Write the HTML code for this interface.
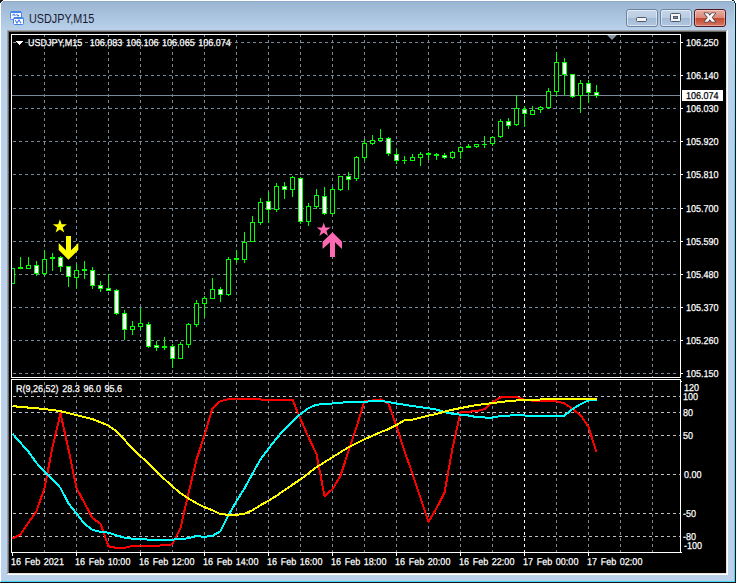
<!DOCTYPE html>
<html><head><meta charset="utf-8"><title>USDJPY,M15</title>
<style>
html,body{margin:0;padding:0;background:#fff;}
body{width:738px;height:584px;position:relative;overflow:hidden;font-family:"Liberation Sans",sans-serif;}
#win{position:absolute;left:0;top:0;width:736px;height:583px;background:#B9D1EA;}
#cap{position:absolute;left:0;top:0;width:736px;height:30px;background:linear-gradient(#99B4D1,#B9D1EA);}
.a{position:absolute;}
.t{position:absolute;white-space:nowrap;line-height:12px;}
.ax{font-size:10px;color:#fff;transform:scaleX(.9);transform-origin:0 0;word-spacing:1.3px;text-rendering:geometricPrecision;-webkit-text-stroke:0.25px currentColor;}
#title{left:28.5px;top:12px;font-size:12px;line-height:14px;color:#0b0b1e;opacity:.92;transform:scaleX(.9);transform-origin:0 0;}
</style></head><body>
<div id="win">
 <div id="cap"></div>
 <!-- outer edges -->
 <div class="a" style="left:0;top:0;width:736px;height:1px;background:#fff"></div>
 <div class="a" style="left:0;top:1px;width:734px;height:1px;background:#8FAACA"></div>
 <div class="a" style="left:0;top:0;width:1px;height:583px;background:#fff"></div>
 <div class="a" style="left:734px;top:2px;width:1px;height:580px;background:linear-gradient(#A8E9FC 0px,#55D9FA 160px,#42D5F8 580px)"></div>
 <div class="a" style="left:735px;top:2px;width:1px;height:581px;background:#161616"></div>
 <div class="a" style="left:1px;top:581px;width:734px;height:1px;background:#42D5F8"></div>
 <div class="a" style="left:0;top:582px;width:736px;height:1px;background:#161616"></div>
 <!-- corners -->
 <div class="a" style="left:0;top:0;width:3px;height:1px;background:#1c1c1c"></div>
 <div class="a" style="left:0;top:1px;width:2px;height:1px;background:#1c1c1c"></div>
 <div class="a" style="left:0;top:2px;width:1px;height:1px;background:#1c1c1c"></div>
 <div class="a" style="left:2px;top:1px;width:1px;height:1px;background:#f4f8fc"></div>
 <div class="a" style="left:1px;top:2px;width:1px;height:1px;background:#f4f8fc"></div>
 <div class="a" style="left:732px;top:0;width:2px;height:1px;background:#0B2228"></div>
 <div class="a" style="left:734px;top:1px;width:1px;height:2px;background:#0B2228"></div>
 <div class="a" style="left:734px;top:0;width:2px;height:1px;background:#fff"></div>
 <div class="a" style="left:735px;top:1px;width:1px;height:2px;background:#fff"></div>
 <div class="a" style="left:732px;top:1px;width:2px;height:1px;background:#C9F3FF"></div>
 <!-- icon -->
 <svg class="a" style="left:9px;top:10px" width="17" height="16" viewBox="0 0 17 16">
  <rect x="1.5" y="1.5" width="11" height="8" rx="1" fill="#fff" stroke="#4582F5" stroke-width="1"/>
  <rect x="2" y="1" width="10" height="2" fill="#4582F5"/>
  <path d="M3.5 5.5 L5 4.2 L6.5 6 M7.5 4 L9 6.2 L10 5" fill="none" stroke="#3E76EA" stroke-width="1.1"/>
  <rect x="4.5" y="7.5" width="10" height="7" rx="1" fill="#fff" stroke="#4582F5" stroke-width="1"/>
  <rect x="5" y="7" width="9" height="2" fill="#4582F5"/>
  <polyline points="6.3,10.2 8,13 10,10 12,13.2" fill="none" stroke="#3E76EA" stroke-width="1.1"/>
  <g fill="#3C9A70"><rect x="4" y="1" width="1" height="1"/><rect x="8" y="1" width="1" height="1"/><rect x="7" y="7" width="1" height="1"/><rect x="11" y="7" width="1" height="1"/><rect x="1" y="5" width="1" height="1"/><rect x="4" y="11" width="1" height="1"/><rect x="14" y="11" width="1" height="1"/><rect x="8" y="14" width="1" height="1"/></g>
 </svg>
 <div class="t" id="title">USDJPY,M15</div>
 <!-- buttons -->
 <svg class="a" style="left:620px;top:5px" width="112" height="26" viewBox="620 5 112 26">
  <defs>
   <linearGradient id="gb" x1="0" y1="0" x2="0" y2="1">
    <stop offset="0" stop-color="#C6D6E9"/><stop offset=".47" stop-color="#BACDE3"/>
    <stop offset=".5" stop-color="#A2B9D5"/><stop offset="1" stop-color="#B4C9E1"/>
   </linearGradient>
   <linearGradient id="gr" x1="0" y1="0" x2="0" y2="1">
    <stop offset="0" stop-color="#E9B0A3"/><stop offset=".47" stop-color="#DA8B79"/>
    <stop offset=".5" stop-color="#C4482D"/><stop offset="1" stop-color="#D47A66"/>
   </linearGradient>
  </defs>
  <rect x="626.5" y="9.5" width="31" height="17" rx="2.5" fill="url(#gb)" stroke="#6D84A1"/>
  <rect x="627.5" y="10.5" width="29" height="15" rx="1.5" fill="none" stroke="rgba(255,255,255,.5)"/>
  <rect x="660.5" y="9.5" width="31" height="17" rx="2.5" fill="url(#gb)" stroke="#6D84A1"/>
  <rect x="661.5" y="10.5" width="29" height="15" rx="1.5" fill="none" stroke="rgba(255,255,255,.5)"/>
  <rect x="694.5" y="9.5" width="31" height="17" rx="2.5" fill="url(#gr)" stroke="#501822"/>
  <rect x="695.5" y="10.5" width="29" height="15" rx="1.5" fill="none" stroke="rgba(255,255,255,.35)"/>
  <!-- min glyph -->
  <rect x="636.5" y="17.5" width="10" height="4" rx="1" fill="#F4F4F4" stroke="#4E596B"/>
  <!-- max glyph -->
  <rect x="670.5" y="13.5" width="10" height="8" rx="1" fill="#F4F4F4" stroke="#4E596B"/>
  <rect x="673.5" y="16.5" width="4" height="2" fill="#7B96BE" stroke="#4E596B"/>
  <!-- close glyph -->
  <path d="M704.4 13.3 L707.8 13.3 L709.8 15.8 L711.8 13.3 L715.2 13.3 L711.7 17.5 L715.2 21.7 L711.8 21.7 L709.8 19.2 L707.8 21.7 L704.4 21.7 L707.9 17.5 Z" fill="#FDFDFD" stroke="#53404A" stroke-width="1.5" stroke-linejoin="round" paint-order="stroke"/>
 </svg>
 <!-- client sunken edge -->
 <div class="a" style="left:7px;top:30px;width:721px;height:545px;background:#fff"></div>
 <div class="a" style="left:7px;top:30px;width:720px;height:544px;background:#A0A0A0"></div>
 <div class="a" style="left:8px;top:31px;width:719px;height:543px;background:#E3E3E3"></div>
 <div class="a" style="left:8px;top:31px;width:718px;height:542px;background:#696969"></div>
 <div class="a" style="left:9px;top:32px;width:717px;height:541px;background:#000"></div>
</div>
<svg class="a" style="left:0;top:0" width="738" height="584" viewBox="0 0 738 584">
<defs><clipPath id="cm"><rect x="12" y="35" width="668" height="342"/></clipPath><clipPath id="cs"><rect x="12" y="380" width="668" height="172"/></clipPath></defs>
<g shape-rendering="crispEdges">
<line x1="44.5" y1="34" x2="44.5" y2="377" stroke="#778899" stroke-width="1" stroke-dasharray="3 3"/>
<line x1="44.5" y1="382" x2="44.5" y2="552" stroke="#778899" stroke-width="1" stroke-dasharray="3 3"/>
<line x1="76.5" y1="34" x2="76.5" y2="377" stroke="#778899" stroke-width="1" stroke-dasharray="3 3"/>
<line x1="76.5" y1="382" x2="76.5" y2="552" stroke="#778899" stroke-width="1" stroke-dasharray="3 3"/>
<line x1="108.5" y1="34" x2="108.5" y2="377" stroke="#778899" stroke-width="1" stroke-dasharray="3 3"/>
<line x1="108.5" y1="382" x2="108.5" y2="552" stroke="#778899" stroke-width="1" stroke-dasharray="3 3"/>
<line x1="140.5" y1="34" x2="140.5" y2="377" stroke="#778899" stroke-width="1" stroke-dasharray="3 3"/>
<line x1="140.5" y1="382" x2="140.5" y2="552" stroke="#778899" stroke-width="1" stroke-dasharray="3 3"/>
<line x1="172.5" y1="34" x2="172.5" y2="377" stroke="#778899" stroke-width="1" stroke-dasharray="3 3"/>
<line x1="172.5" y1="382" x2="172.5" y2="552" stroke="#778899" stroke-width="1" stroke-dasharray="3 3"/>
<line x1="204.5" y1="34" x2="204.5" y2="377" stroke="#778899" stroke-width="1" stroke-dasharray="3 3"/>
<line x1="204.5" y1="382" x2="204.5" y2="552" stroke="#778899" stroke-width="1" stroke-dasharray="3 3"/>
<line x1="236.5" y1="34" x2="236.5" y2="377" stroke="#778899" stroke-width="1" stroke-dasharray="3 3"/>
<line x1="236.5" y1="382" x2="236.5" y2="552" stroke="#778899" stroke-width="1" stroke-dasharray="3 3"/>
<line x1="268.5" y1="34" x2="268.5" y2="377" stroke="#778899" stroke-width="1" stroke-dasharray="3 3"/>
<line x1="268.5" y1="382" x2="268.5" y2="552" stroke="#778899" stroke-width="1" stroke-dasharray="3 3"/>
<line x1="300.5" y1="34" x2="300.5" y2="377" stroke="#778899" stroke-width="1" stroke-dasharray="3 3"/>
<line x1="300.5" y1="382" x2="300.5" y2="552" stroke="#778899" stroke-width="1" stroke-dasharray="3 3"/>
<line x1="332.5" y1="34" x2="332.5" y2="377" stroke="#778899" stroke-width="1" stroke-dasharray="3 3"/>
<line x1="332.5" y1="382" x2="332.5" y2="552" stroke="#778899" stroke-width="1" stroke-dasharray="3 3"/>
<line x1="364.5" y1="34" x2="364.5" y2="377" stroke="#778899" stroke-width="1" stroke-dasharray="3 3"/>
<line x1="364.5" y1="382" x2="364.5" y2="552" stroke="#778899" stroke-width="1" stroke-dasharray="3 3"/>
<line x1="396.5" y1="34" x2="396.5" y2="377" stroke="#778899" stroke-width="1" stroke-dasharray="3 3"/>
<line x1="396.5" y1="382" x2="396.5" y2="552" stroke="#778899" stroke-width="1" stroke-dasharray="3 3"/>
<line x1="428.5" y1="34" x2="428.5" y2="377" stroke="#778899" stroke-width="1" stroke-dasharray="3 3"/>
<line x1="428.5" y1="382" x2="428.5" y2="552" stroke="#778899" stroke-width="1" stroke-dasharray="3 3"/>
<line x1="460.5" y1="34" x2="460.5" y2="377" stroke="#778899" stroke-width="1" stroke-dasharray="3 3"/>
<line x1="460.5" y1="382" x2="460.5" y2="552" stroke="#778899" stroke-width="1" stroke-dasharray="3 3"/>
<line x1="492.5" y1="34" x2="492.5" y2="377" stroke="#778899" stroke-width="1" stroke-dasharray="3 3"/>
<line x1="492.5" y1="382" x2="492.5" y2="552" stroke="#778899" stroke-width="1" stroke-dasharray="3 3"/>
<line x1="524.5" y1="34" x2="524.5" y2="377" stroke="#FFFFFF" stroke-width="1" stroke-dasharray="3 3"/>
<line x1="524.5" y1="382" x2="524.5" y2="552" stroke="#FFFFFF" stroke-width="1" stroke-dasharray="3 3"/>
<line x1="556.5" y1="34" x2="556.5" y2="377" stroke="#778899" stroke-width="1" stroke-dasharray="3 3"/>
<line x1="556.5" y1="382" x2="556.5" y2="552" stroke="#778899" stroke-width="1" stroke-dasharray="3 3"/>
<line x1="588.5" y1="34" x2="588.5" y2="377" stroke="#778899" stroke-width="1" stroke-dasharray="3 3"/>
<line x1="588.5" y1="382" x2="588.5" y2="552" stroke="#778899" stroke-width="1" stroke-dasharray="3 3"/>
<line x1="620.5" y1="34" x2="620.5" y2="377" stroke="#778899" stroke-width="1" stroke-dasharray="3 3"/>
<line x1="620.5" y1="382" x2="620.5" y2="552" stroke="#778899" stroke-width="1" stroke-dasharray="3 3"/>
<line x1="652.5" y1="34" x2="652.5" y2="377" stroke="#778899" stroke-width="1" stroke-dasharray="3 3"/>
<line x1="652.5" y1="382" x2="652.5" y2="552" stroke="#778899" stroke-width="1" stroke-dasharray="3 3"/>
<line x1="13" y1="42.5" x2="679" y2="42.5" stroke="#778899" stroke-width="1" stroke-dasharray="3 3"/>
<line x1="13" y1="75.5" x2="679" y2="75.5" stroke="#778899" stroke-width="1" stroke-dasharray="3 3"/>
<line x1="13" y1="108.5" x2="679" y2="108.5" stroke="#778899" stroke-width="1" stroke-dasharray="3 3"/>
<line x1="13" y1="141.5" x2="679" y2="141.5" stroke="#778899" stroke-width="1" stroke-dasharray="3 3"/>
<line x1="13" y1="174.5" x2="679" y2="174.5" stroke="#778899" stroke-width="1" stroke-dasharray="3 3"/>
<line x1="13" y1="208.5" x2="679" y2="208.5" stroke="#778899" stroke-width="1" stroke-dasharray="3 3"/>
<line x1="13" y1="241.5" x2="679" y2="241.5" stroke="#778899" stroke-width="1" stroke-dasharray="3 3"/>
<line x1="13" y1="274.5" x2="679" y2="274.5" stroke="#778899" stroke-width="1" stroke-dasharray="3 3"/>
<line x1="13" y1="307.5" x2="679" y2="307.5" stroke="#778899" stroke-width="1" stroke-dasharray="3 3"/>
<line x1="13" y1="340.5" x2="679" y2="340.5" stroke="#778899" stroke-width="1" stroke-dasharray="3 3"/>
<line x1="13" y1="373.5" x2="679" y2="373.5" stroke="#778899" stroke-width="1" stroke-dasharray="3 3"/>
<line x1="13" y1="396.5" x2="680" y2="396.5" stroke="#C0C0C0" stroke-width="1" stroke-dasharray="3 3"/>
<line x1="13" y1="412.5" x2="680" y2="412.5" stroke="#C0C0C0" stroke-width="1" stroke-dasharray="3 3"/>
<line x1="13" y1="435.5" x2="680" y2="435.5" stroke="#C0C0C0" stroke-width="1" stroke-dasharray="3 3"/>
<line x1="13" y1="474.5" x2="680" y2="474.5" stroke="#C0C0C0" stroke-width="1" stroke-dasharray="3 3"/>
<line x1="13" y1="513.5" x2="680" y2="513.5" stroke="#C0C0C0" stroke-width="1" stroke-dasharray="3 3"/>
<line x1="13" y1="536.5" x2="680" y2="536.5" stroke="#C0C0C0" stroke-width="1" stroke-dasharray="3 3"/>
<line x1="12" y1="95.5" x2="680" y2="95.5" stroke="#778899" stroke-width="1"/>
</g>
<g shape-rendering="crispEdges" clip-path="url(#cm)">
<rect x="12" y="268" width="1" height="16" fill="#00FF00"/>
<rect x="10" y="268" width="5" height="16" fill="#00FF00"/>
<rect x="11" y="269" width="3" height="14" fill="#000000"/>
<rect x="20" y="257" width="1" height="12" fill="#00FF00"/>
<rect x="18" y="267" width="5" height="2" fill="#00FF00"/>
<rect x="28" y="257" width="1" height="12" fill="#00FF00"/>
<rect x="26" y="265" width="5" height="4" fill="#00FF00"/>
<rect x="27" y="266" width="3" height="2" fill="#000000"/>
<rect x="36" y="261" width="1" height="15" fill="#00FF00"/>
<rect x="34" y="265" width="5" height="9" fill="#00FF00"/>
<rect x="35" y="266" width="3" height="7" fill="#FFFFFF"/>
<rect x="44" y="250" width="1" height="26" fill="#00FF00"/>
<rect x="42" y="259" width="5" height="15" fill="#00FF00"/>
<rect x="43" y="260" width="3" height="13" fill="#000000"/>
<rect x="52" y="253" width="1" height="18" fill="#00FF00"/>
<rect x="50" y="257" width="5" height="2" fill="#00FF00"/>
<rect x="60" y="256" width="1" height="16" fill="#00FF00"/>
<rect x="58" y="257" width="5" height="10" fill="#00FF00"/>
<rect x="59" y="258" width="3" height="8" fill="#FFFFFF"/>
<rect x="68" y="266" width="1" height="21" fill="#00FF00"/>
<rect x="66" y="266" width="5" height="11" fill="#00FF00"/>
<rect x="67" y="267" width="3" height="9" fill="#FFFFFF"/>
<rect x="76" y="264" width="1" height="25" fill="#00FF00"/>
<rect x="74" y="270" width="5" height="8" fill="#00FF00"/>
<rect x="75" y="271" width="3" height="6" fill="#000000"/>
<rect x="84" y="261" width="1" height="18" fill="#00FF00"/>
<rect x="82" y="269" width="5" height="2" fill="#00FF00"/>
<rect x="92" y="267" width="1" height="22" fill="#00FF00"/>
<rect x="90" y="270" width="5" height="16" fill="#00FF00"/>
<rect x="91" y="271" width="3" height="14" fill="#FFFFFF"/>
<rect x="100" y="281" width="1" height="11" fill="#00FF00"/>
<rect x="98" y="285" width="5" height="4" fill="#00FF00"/>
<rect x="99" y="286" width="3" height="2" fill="#FFFFFF"/>
<rect x="108" y="274" width="1" height="17" fill="#00FF00"/>
<rect x="106" y="288" width="5" height="3" fill="#00FF00"/>
<rect x="107" y="289" width="3" height="1" fill="#FFFFFF"/>
<rect x="116" y="289" width="1" height="26" fill="#00FF00"/>
<rect x="114" y="290" width="5" height="24" fill="#00FF00"/>
<rect x="115" y="291" width="3" height="22" fill="#FFFFFF"/>
<rect x="124" y="310" width="1" height="30" fill="#00FF00"/>
<rect x="122" y="313" width="5" height="17" fill="#00FF00"/>
<rect x="123" y="314" width="3" height="15" fill="#FFFFFF"/>
<rect x="132" y="321" width="1" height="14" fill="#00FF00"/>
<rect x="130" y="326" width="5" height="4" fill="#00FF00"/>
<rect x="131" y="327" width="3" height="2" fill="#000000"/>
<rect x="140" y="308" width="1" height="22" fill="#00FF00"/>
<rect x="138" y="323" width="5" height="4" fill="#00FF00"/>
<rect x="139" y="324" width="3" height="2" fill="#000000"/>
<rect x="148" y="322" width="1" height="26" fill="#00FF00"/>
<rect x="146" y="324" width="5" height="23" fill="#00FF00"/>
<rect x="147" y="325" width="3" height="21" fill="#FFFFFF"/>
<rect x="156" y="341" width="1" height="10" fill="#00FF00"/>
<rect x="154" y="345" width="5" height="3" fill="#00FF00"/>
<rect x="155" y="346" width="3" height="1" fill="#FFFFFF"/>
<rect x="164" y="337" width="1" height="13" fill="#00FF00"/>
<rect x="162" y="346" width="5" height="2" fill="#00FF00"/>
<rect x="172" y="344" width="1" height="24" fill="#00FF00"/>
<rect x="170" y="346" width="5" height="13" fill="#00FF00"/>
<rect x="171" y="347" width="3" height="11" fill="#FFFFFF"/>
<rect x="180" y="342" width="1" height="17" fill="#00FF00"/>
<rect x="178" y="344" width="5" height="15" fill="#00FF00"/>
<rect x="179" y="345" width="3" height="13" fill="#000000"/>
<rect x="188" y="323" width="1" height="25" fill="#00FF00"/>
<rect x="186" y="324" width="5" height="21" fill="#00FF00"/>
<rect x="187" y="325" width="3" height="19" fill="#000000"/>
<rect x="196" y="300" width="1" height="27" fill="#00FF00"/>
<rect x="194" y="303" width="5" height="22" fill="#00FF00"/>
<rect x="195" y="304" width="3" height="20" fill="#000000"/>
<rect x="204" y="296" width="1" height="21" fill="#00FF00"/>
<rect x="202" y="298" width="5" height="6" fill="#00FF00"/>
<rect x="203" y="299" width="3" height="4" fill="#000000"/>
<rect x="212" y="278" width="1" height="21" fill="#00FF00"/>
<rect x="210" y="289" width="5" height="10" fill="#00FF00"/>
<rect x="211" y="290" width="3" height="8" fill="#000000"/>
<rect x="220" y="287" width="1" height="15" fill="#00FF00"/>
<rect x="218" y="289" width="5" height="6" fill="#00FF00"/>
<rect x="219" y="290" width="3" height="4" fill="#FFFFFF"/>
<rect x="228" y="257" width="1" height="39" fill="#00FF00"/>
<rect x="226" y="259" width="5" height="36" fill="#00FF00"/>
<rect x="227" y="260" width="3" height="34" fill="#000000"/>
<rect x="236" y="250" width="1" height="13" fill="#00FF00"/>
<rect x="234" y="258" width="5" height="2" fill="#00FF00"/>
<rect x="244" y="232" width="1" height="31" fill="#00FF00"/>
<rect x="242" y="242" width="5" height="18" fill="#00FF00"/>
<rect x="243" y="243" width="3" height="16" fill="#000000"/>
<rect x="252" y="216" width="1" height="26" fill="#00FF00"/>
<rect x="250" y="222" width="5" height="20" fill="#00FF00"/>
<rect x="251" y="223" width="3" height="18" fill="#000000"/>
<rect x="260" y="198" width="1" height="27" fill="#00FF00"/>
<rect x="258" y="202" width="5" height="21" fill="#00FF00"/>
<rect x="259" y="203" width="3" height="19" fill="#000000"/>
<rect x="268" y="192" width="1" height="31" fill="#00FF00"/>
<rect x="266" y="201" width="5" height="9" fill="#00FF00"/>
<rect x="267" y="202" width="3" height="7" fill="#FFFFFF"/>
<rect x="276" y="183" width="1" height="29" fill="#00FF00"/>
<rect x="274" y="186" width="5" height="24" fill="#00FF00"/>
<rect x="275" y="187" width="3" height="22" fill="#000000"/>
<rect x="284" y="182" width="1" height="17" fill="#00FF00"/>
<rect x="282" y="186" width="5" height="4" fill="#00FF00"/>
<rect x="283" y="187" width="3" height="2" fill="#FFFFFF"/>
<rect x="292" y="176" width="1" height="21" fill="#00FF00"/>
<rect x="290" y="177" width="5" height="13" fill="#00FF00"/>
<rect x="291" y="178" width="3" height="11" fill="#000000"/>
<rect x="300" y="177" width="1" height="47" fill="#00FF00"/>
<rect x="298" y="178" width="5" height="44" fill="#00FF00"/>
<rect x="299" y="179" width="3" height="42" fill="#FFFFFF"/>
<rect x="308" y="203" width="1" height="23" fill="#00FF00"/>
<rect x="306" y="206" width="5" height="16" fill="#00FF00"/>
<rect x="307" y="207" width="3" height="14" fill="#000000"/>
<rect x="316" y="189" width="1" height="20" fill="#00FF00"/>
<rect x="314" y="195" width="5" height="12" fill="#00FF00"/>
<rect x="315" y="196" width="3" height="10" fill="#000000"/>
<rect x="324" y="187" width="1" height="28" fill="#00FF00"/>
<rect x="322" y="196" width="5" height="18" fill="#00FF00"/>
<rect x="323" y="197" width="3" height="16" fill="#FFFFFF"/>
<rect x="332" y="187" width="1" height="27" fill="#00FF00"/>
<rect x="330" y="189" width="5" height="25" fill="#00FF00"/>
<rect x="331" y="190" width="3" height="23" fill="#000000"/>
<rect x="340" y="176" width="1" height="15" fill="#00FF00"/>
<rect x="338" y="176" width="5" height="14" fill="#00FF00"/>
<rect x="339" y="177" width="3" height="12" fill="#000000"/>
<rect x="348" y="172" width="1" height="18" fill="#00FF00"/>
<rect x="346" y="176" width="5" height="4" fill="#00FF00"/>
<rect x="347" y="177" width="3" height="2" fill="#FFFFFF"/>
<rect x="356" y="156" width="1" height="25" fill="#00FF00"/>
<rect x="354" y="157" width="5" height="22" fill="#00FF00"/>
<rect x="355" y="158" width="3" height="20" fill="#000000"/>
<rect x="364" y="139" width="1" height="22" fill="#00FF00"/>
<rect x="362" y="143" width="5" height="15" fill="#00FF00"/>
<rect x="363" y="144" width="3" height="13" fill="#000000"/>
<rect x="372" y="135" width="1" height="10" fill="#00FF00"/>
<rect x="370" y="140" width="5" height="4" fill="#00FF00"/>
<rect x="371" y="141" width="3" height="2" fill="#000000"/>
<rect x="380" y="129" width="1" height="12" fill="#00FF00"/>
<rect x="378" y="138" width="5" height="3" fill="#00FF00"/>
<rect x="379" y="139" width="3" height="1" fill="#000000"/>
<rect x="388" y="137" width="1" height="19" fill="#00FF00"/>
<rect x="386" y="138" width="5" height="16" fill="#00FF00"/>
<rect x="387" y="139" width="3" height="14" fill="#FFFFFF"/>
<rect x="396" y="149" width="1" height="15" fill="#00FF00"/>
<rect x="394" y="154" width="5" height="7" fill="#00FF00"/>
<rect x="395" y="155" width="3" height="5" fill="#FFFFFF"/>
<rect x="404" y="156" width="1" height="8" fill="#00FF00"/>
<rect x="402" y="160" width="5" height="1" fill="#00FF00"/>
<rect x="412" y="154" width="1" height="7" fill="#00FF00"/>
<rect x="410" y="157" width="5" height="4" fill="#00FF00"/>
<rect x="411" y="158" width="3" height="2" fill="#000000"/>
<rect x="420" y="152" width="1" height="14" fill="#00FF00"/>
<rect x="418" y="154" width="5" height="4" fill="#00FF00"/>
<rect x="419" y="155" width="3" height="2" fill="#000000"/>
<rect x="428" y="152" width="1" height="8" fill="#00FF00"/>
<rect x="426" y="153" width="5" height="2" fill="#00FF00"/>
<rect x="436" y="153" width="1" height="7" fill="#00FF00"/>
<rect x="434" y="154" width="5" height="2" fill="#00FF00"/>
<rect x="444" y="153" width="1" height="6" fill="#00FF00"/>
<rect x="442" y="155" width="5" height="3" fill="#00FF00"/>
<rect x="443" y="156" width="3" height="1" fill="#FFFFFF"/>
<rect x="452" y="151" width="1" height="8" fill="#00FF00"/>
<rect x="450" y="152" width="5" height="6" fill="#00FF00"/>
<rect x="451" y="153" width="3" height="4" fill="#000000"/>
<rect x="460" y="146" width="1" height="13" fill="#00FF00"/>
<rect x="458" y="147" width="5" height="5" fill="#00FF00"/>
<rect x="459" y="148" width="3" height="3" fill="#000000"/>
<rect x="468" y="144" width="1" height="4" fill="#00FF00"/>
<rect x="466" y="146" width="5" height="2" fill="#00FF00"/>
<rect x="476" y="144" width="1" height="4" fill="#00FF00"/>
<rect x="474" y="144" width="5" height="3" fill="#00FF00"/>
<rect x="475" y="145" width="3" height="1" fill="#000000"/>
<rect x="484" y="136" width="1" height="12" fill="#00FF00"/>
<rect x="482" y="144" width="5" height="1" fill="#00FF00"/>
<rect x="492" y="136" width="1" height="10" fill="#00FF00"/>
<rect x="490" y="137" width="5" height="7" fill="#00FF00"/>
<rect x="491" y="138" width="3" height="5" fill="#000000"/>
<rect x="500" y="119" width="1" height="19" fill="#00FF00"/>
<rect x="498" y="121" width="5" height="16" fill="#00FF00"/>
<rect x="499" y="122" width="3" height="14" fill="#000000"/>
<rect x="508" y="118" width="1" height="11" fill="#00FF00"/>
<rect x="506" y="121" width="5" height="5" fill="#00FF00"/>
<rect x="507" y="122" width="3" height="3" fill="#FFFFFF"/>
<rect x="516" y="95" width="1" height="31" fill="#00FF00"/>
<rect x="514" y="108" width="5" height="17" fill="#00FF00"/>
<rect x="515" y="109" width="3" height="15" fill="#000000"/>
<rect x="524" y="106" width="1" height="21" fill="#00FF00"/>
<rect x="522" y="109" width="5" height="5" fill="#00FF00"/>
<rect x="523" y="110" width="3" height="3" fill="#FFFFFF"/>
<rect x="532" y="106" width="1" height="9" fill="#00FF00"/>
<rect x="530" y="110" width="5" height="5" fill="#00FF00"/>
<rect x="531" y="111" width="3" height="3" fill="#000000"/>
<rect x="540" y="106" width="1" height="7" fill="#00FF00"/>
<rect x="538" y="107" width="5" height="3" fill="#00FF00"/>
<rect x="539" y="108" width="3" height="1" fill="#000000"/>
<rect x="548" y="88" width="1" height="21" fill="#00FF00"/>
<rect x="546" y="91" width="5" height="17" fill="#00FF00"/>
<rect x="547" y="92" width="3" height="15" fill="#000000"/>
<rect x="556" y="52" width="1" height="44" fill="#00FF00"/>
<rect x="554" y="62" width="5" height="30" fill="#00FF00"/>
<rect x="555" y="63" width="3" height="28" fill="#000000"/>
<rect x="564" y="58" width="1" height="37" fill="#00FF00"/>
<rect x="562" y="62" width="5" height="13" fill="#00FF00"/>
<rect x="563" y="63" width="3" height="11" fill="#FFFFFF"/>
<rect x="572" y="74" width="1" height="24" fill="#00FF00"/>
<rect x="570" y="74" width="5" height="23" fill="#00FF00"/>
<rect x="571" y="75" width="3" height="21" fill="#FFFFFF"/>
<rect x="580" y="80" width="1" height="33" fill="#00FF00"/>
<rect x="578" y="83" width="5" height="13" fill="#00FF00"/>
<rect x="579" y="84" width="3" height="11" fill="#000000"/>
<rect x="588" y="80" width="1" height="23" fill="#00FF00"/>
<rect x="586" y="83" width="5" height="10" fill="#00FF00"/>
<rect x="587" y="84" width="3" height="8" fill="#FFFFFF"/>
<rect x="596" y="85" width="1" height="13" fill="#00FF00"/>
<rect x="594" y="92" width="5" height="4" fill="#00FF00"/>
<rect x="595" y="93" width="3" height="2" fill="#FFFFFF"/>
</g>
<polygon points="607,35 617,35 612,40" fill="#8593A3"/>
<polygon points="59.90,219.20 61.60,224.25 66.94,224.31 62.66,227.50 64.25,232.59 59.90,229.50 55.55,232.59 57.14,227.50 52.86,224.31 58.20,224.25" fill="#FFFF00"/>
<polygon points="66,236 71,236 71,250.2 78.3,243 78.3,250 68.5,259.7 58.7,250 58.7,243 66,250.2" fill="#FFFF00"/>
<polygon points="323.70,222.50 325.40,227.55 330.74,227.61 326.46,230.80 328.05,235.89 323.70,232.80 319.35,235.89 320.94,230.80 316.66,227.61 322.00,227.55" fill="#FF69B4"/>
<polygon points="332.5,232.2 342,241.7 342,249 335,242.2 335,257 330,257 330,242.2 322.6,249 322.6,241.7" fill="#FF69B4"/>
<polyline points="12.5,538.5 20.5,534.4 28.5,522.7 36.5,511.0 44.5,488.0 52.5,447.3 60.5,413.3 68.5,449.5 76.5,488.0 84.5,503.0 92.5,518.2 100.5,523.8 108.5,546.3 116.5,547.9 124.5,547.9 132.5,545.9 140.5,545.5 148.5,545.5 156.5,545.7 164.5,545.3 172.5,544.3 180.5,528.2 188.5,493.1 196.5,459.6 204.5,435.2 212.5,408.1 220.5,401.1 228.5,399.1 236.5,398.5 244.5,398.5 252.5,398.5 260.5,399.5 268.5,399.5 276.5,399.5 284.5,399.5 292.5,399.6 300.5,419.1 308.5,437.2 316.5,454.1 324.5,496.2 332.5,489.2 340.5,475.7 348.5,451.1 356.5,427.1 364.5,401.1 372.5,400.5 380.5,399.5 388.5,403.7 396.5,426.1 404.5,451.1 412.5,473.7 420.5,498.2 428.5,521.8 436.5,508.2 444.5,492.7 452.5,448.2 460.5,412.5 468.5,411.7 476.5,411.1 484.5,409.1 492.5,402.1 500.5,397.5 508.5,397.1 516.5,397.1 524.5,399.7 532.5,400.7 540.5,400.7 548.5,400.6 556.5,401.3 564.5,403.3 572.5,409.1 580.5,415.1 588.5,427.1 596.5,452.2" fill="none" stroke="#FF0000" stroke-width="2" stroke-linejoin="round" shape-rendering="crispEdges" clip-path="url(#cs)"/>
<polyline points="12.5,433.8 20.5,442.8 28.5,451.8 36.5,463.0 44.5,471.6 52.5,479.2 60.5,488.0 68.5,503.4 76.5,513.5 84.5,523.8 92.5,529.9 100.5,531.9 108.5,532.7 116.5,535.3 124.5,537.7 132.5,538.7 140.5,538.9 148.5,539.7 156.5,539.7 164.5,539.7 172.5,539.7 180.5,538.9 188.5,538.3 196.5,535.9 204.5,536.9 212.5,535.7 220.5,531.3 228.5,515.2 236.5,501.2 244.5,488.4 252.5,473.7 260.5,459.2 268.5,448.6 276.5,438.6 284.5,429.1 292.5,421.1 300.5,414.1 308.5,408.1 316.5,404.7 324.5,404.1 332.5,403.5 340.5,402.7 348.5,402.1 356.5,401.7 364.5,401.7 372.5,401.3 380.5,400.7 388.5,402.1 396.5,403.5 404.5,404.7 412.5,406.1 420.5,407.1 428.5,408.3 436.5,409.6 444.5,412.1 452.5,413.7 460.5,414.7 468.5,415.5 476.5,417.1 484.5,417.5 492.5,417.5 500.5,416.1 508.5,415.7 516.5,414.7 524.5,415.5 532.5,415.5 540.5,415.5 548.5,415.5 556.5,415.5 564.5,415.5 572.5,409.1 580.5,404.1 588.5,400.5 596.5,399.7" fill="none" stroke="#00FFFF" stroke-width="2" stroke-linejoin="round" shape-rendering="crispEdges" clip-path="url(#cs)"/>
<polyline points="12.5,406.1 20.5,406.9 28.5,407.6 36.5,408.3 44.5,409.1 52.5,410.1 60.5,411.1 68.5,413.1 76.5,415.1 84.5,417.1 92.5,419.1 100.5,422.2 108.5,425.7 116.5,431.1 124.5,439.8 132.5,448.6 140.5,456.2 148.5,463.4 156.5,471.1 164.5,479.1 172.5,486.5 180.5,493.1 188.5,498.6 196.5,503.2 204.5,507.2 212.5,510.2 220.5,514.2 228.5,514.8 236.5,514.8 244.5,513.8 252.5,510.2 260.5,505.2 268.5,500.8 276.5,495.8 284.5,490.1 292.5,484.7 300.5,479.3 308.5,473.3 316.5,467.2 324.5,462.2 332.5,457.2 340.5,452.2 348.5,447.2 356.5,443.2 364.5,439.2 372.5,435.8 380.5,432.2 388.5,429.1 396.5,425.1 404.5,420.1 412.5,419.7 420.5,417.7 428.5,415.7 436.5,413.9 444.5,411.7 452.5,409.7 460.5,408.1 468.5,406.5 476.5,405.1 484.5,404.1 492.5,403.1 500.5,402.1 508.5,401.1 516.5,400.5 524.5,400.1 532.5,399.7 540.5,399.5 548.5,399.1 556.5,398.9 564.5,398.7 572.5,398.7 580.5,398.7 588.5,398.7 596.5,398.7" fill="none" stroke="#FFFF00" stroke-width="2" stroke-linejoin="round" shape-rendering="crispEdges" clip-path="url(#cs)"/>
<g shape-rendering="crispEdges" fill="#FFFFFF">
<rect x="11" y="34" width="670" height="1" fill="#FFFFFF" />
<rect x="11" y="34" width="1" height="344" fill="#FFFFFF" />
<rect x="680" y="34" width="1" height="344" fill="#FFFFFF" />
<rect x="11" y="377" width="670" height="1" fill="#FFFFFF" />
<rect x="11" y="379" width="670" height="1" fill="#FFFFFF" />
<rect x="11" y="379" width="1" height="174" fill="#FFFFFF" />
<rect x="680" y="379" width="1" height="174" fill="#FFFFFF" />
<rect x="11" y="552" width="670" height="1" fill="#FFFFFF" />
<rect x="681" y="42" width="2" height="1" fill="#FFFFFF" />
<rect x="681" y="75" width="2" height="1" fill="#FFFFFF" />
<rect x="681" y="108" width="2" height="1" fill="#FFFFFF" />
<rect x="681" y="141" width="2" height="1" fill="#FFFFFF" />
<rect x="681" y="174" width="2" height="1" fill="#FFFFFF" />
<rect x="681" y="208" width="2" height="1" fill="#FFFFFF" />
<rect x="681" y="241" width="2" height="1" fill="#FFFFFF" />
<rect x="681" y="274" width="2" height="1" fill="#FFFFFF" />
<rect x="681" y="307" width="2" height="1" fill="#FFFFFF" />
<rect x="681" y="340" width="2" height="1" fill="#FFFFFF" />
<rect x="681" y="373" width="2" height="1" fill="#FFFFFF" />
<rect x="681" y="381" width="1" height="1" fill="#FFFFFF" />
<rect x="681" y="552" width="1" height="1" fill="#FFFFFF" />
<rect x="12" y="553" width="1" height="3" fill="#FFFFFF" />
<rect x="76" y="553" width="1" height="3" fill="#FFFFFF" />
<rect x="140" y="553" width="1" height="3" fill="#FFFFFF" />
<rect x="204" y="553" width="1" height="3" fill="#FFFFFF" />
<rect x="268" y="553" width="1" height="3" fill="#FFFFFF" />
<rect x="332" y="553" width="1" height="3" fill="#FFFFFF" />
<rect x="396" y="553" width="1" height="3" fill="#FFFFFF" />
<rect x="460" y="553" width="1" height="3" fill="#FFFFFF" />
<rect x="524" y="553" width="1" height="3" fill="#FFFFFF" />
<rect x="588" y="553" width="1" height="3" fill="#FFFFFF" />
<rect x="682" y="90" width="41" height="11" fill="#FFFFFF" />
<polygon points="15,41 23,41 19,45" fill="#FFFFFF"/>
</g>
</svg>
<div class="t ax" style="left:685.6px;top:38px">106.250</div>
<div class="t ax" style="left:685.6px;top:71px">106.140</div>
<div class="t ax" style="left:685.6px;top:104px">106.030</div>
<div class="t ax" style="left:685.6px;top:137px">105.920</div>
<div class="t ax" style="left:685.6px;top:170px">105.810</div>
<div class="t ax" style="left:685.6px;top:204px">105.700</div>
<div class="t ax" style="left:685.6px;top:237px">105.590</div>
<div class="t ax" style="left:685.6px;top:270px">105.480</div>
<div class="t ax" style="left:685.6px;top:303px">105.370</div>
<div class="t ax" style="left:685.6px;top:336px">105.260</div>
<div class="t ax" style="left:685.6px;top:369px">105.150</div>
<div class="t ax" style="left:683.6px;top:383px">120</div>
<div class="t ax" style="left:682.8px;top:392px">100</div>
<div class="t ax" style="left:682.8px;top:408px">80</div>
<div class="t ax" style="left:682.8px;top:431px">50</div>
<div class="t ax" style="left:683.8px;top:470px">0.00</div>
<div class="t ax" style="left:682.8px;top:509px">-50</div>
<div class="t ax" style="left:682.8px;top:532px">-80</div>
<div class="t ax" style="left:684px;top:541px">-100</div>
<div class="t ax" style="left:11.4px;top:557px">16 Feb 2021</div>
<div class="t ax" style="left:75.4px;top:557px">16 Feb 10:00</div>
<div class="t ax" style="left:139.4px;top:557px">16 Feb 12:00</div>
<div class="t ax" style="left:203.4px;top:557px">16 Feb 14:00</div>
<div class="t ax" style="left:267.4px;top:557px">16 Feb 16:00</div>
<div class="t ax" style="left:331.4px;top:557px">16 Feb 18:00</div>
<div class="t ax" style="left:395.4px;top:557px">16 Feb 20:00</div>
<div class="t ax" style="left:459.4px;top:557px">16 Feb 22:00</div>
<div class="t ax" style="left:523.4px;top:557px">17 Feb 00:00</div>
<div class="t ax" style="left:587.4px;top:557px">17 Feb 02:00</div>
<div class="t ax" style="left:685.6px;top:91px;color:#000">106.074</div>
<div class="t ax" id="hdr" style="left:27.8px;top:38px">USDJPY,M15&nbsp; 106.083 106.106 106.065 106.074</div>
<div class="t ax" id="ind" style="left:15.8px;top:384px">R(9,26,52) 28.3 96.0 95.6</div>
</body></html>
